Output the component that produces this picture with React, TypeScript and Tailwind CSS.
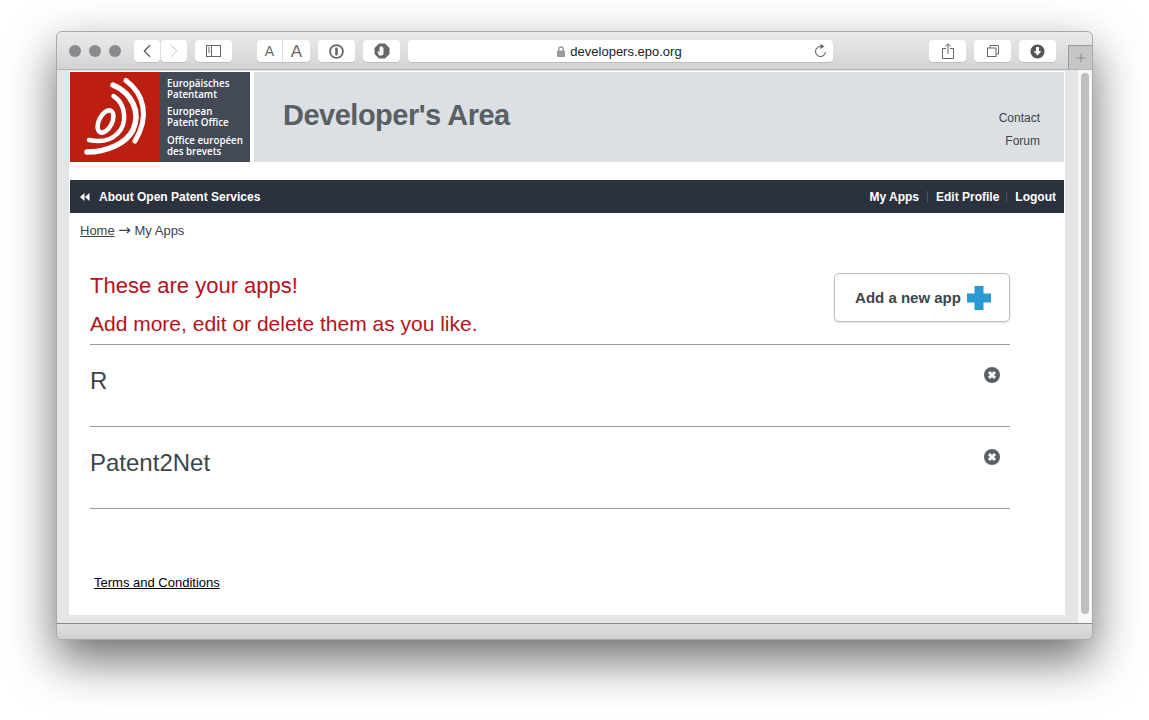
import { ChevronLeft, ChevronRight, Plus } from "lucide-react";

const sans = "font-['Liberation_Sans',Arial,sans-serif]";

function ToolButton({ className, children }: { className: string; children?: React.ReactNode }) {
  return (
    <div className={`flex h-[22px] items-center justify-center rounded-[4px] bg-white shadow-[0_1px_0_rgba(0,0,0,0.12)] ${className}`}>
      {children}
    </div>
  );
}

function Toolbar() {
  return (
    <div className="relative flex h-[38px] items-center rounded-t-[6px] border-b border-[#b4b4b4] bg-gradient-to-b from-[#ebebeb] to-[#d3d3d3] pl-3 pr-[36px] pt-px">
      <div className="flex gap-2">
        <span className="h-3 w-3 rounded-full bg-[#888a8e]" />
        <span className="h-3 w-3 rounded-full bg-[#888a8e]" />
        <span className="h-3 w-3 rounded-full bg-[#888a8e]" />
      </div>
      <div className="ml-[13px] flex gap-px">
        <ToolButton className="w-[26px]"><ChevronLeft size={22} strokeWidth={1.3} className="text-[#555]" /></ToolButton>
        <ToolButton className="w-[26px]"><ChevronRight size={22} strokeWidth={1.1} className="text-[#ccc]" /></ToolButton>
      </div>
      <ToolButton className="ml-2 w-[37px]">
        <svg width="15" height="12" viewBox="0 0 15 12" fill="none" stroke="#666">
          <rect x="0.5" y="0.5" width="14" height="11" />
          <path d="M5.5 0.5v11M2 3h2M2 5h2M2 7h2" />
        </svg>
      </ToolButton>
      <ToolButton className="ml-[25px] w-[53px]">
        <span className={`flex h-full w-[26px] items-center justify-center border-r border-[#ddd] pt-px text-[14px] text-[#666] ${sans}`}>A</span>
        <span className={`flex h-full w-[27px] items-center justify-center pt-px text-[17px] text-[#666] ${sans}`}>A</span>
      </ToolButton>
      <ToolButton className="ml-2 w-[37px]">
        <svg width="15" height="15" viewBox="0 0 15 15">
          <circle cx="7.5" cy="7.5" r="6.4" fill="none" stroke="#666" strokeWidth="1.8" />
          <rect x="6.2" y="3.5" width="2.6" height="8" rx="0.8" fill="#666" />
        </svg>
      </ToolButton>
      <ToolButton className="ml-2 w-[37px]">
        <svg width="16" height="16" viewBox="0 0 16 16">
          <path d="M5 0.5h6L15.5 5v6L11 15.5H5L0.5 11V5z" fill="#666" />
          <path d="M5 12.5 3.5 8.5l1 -.3 1 1.4V4.2h1v3.3V3h1v4.5V3.4h1V8V4.4h1V10c0 1.5-.8 2.5-2 2.5z" fill="#fff" />
        </svg>
      </ToolButton>
      <ToolButton className="relative ml-2 w-[425px]">
        <div className="flex items-center gap-[5px] pr-[2px] pt-px">
          <svg width="8" height="11" viewBox="0 0 8 11">
            <path d="M1.8 5V3.2a2.2 2.2 0 0 1 4.4 0V5" fill="none" stroke="#9a9a9a" strokeWidth="1.3" />
            <rect x="0" y="4.6" width="8" height="6.4" rx="0.8" fill="#9a9a9a" />
          </svg>
          <span className={`text-[13px] text-[#222] ${sans}`}>developers.epo.org</span>
        </div>
        <svg width="13" height="14" viewBox="0 0 13 14" fill="none" className="absolute right-[6px] top-[4px]">
          <path d="M7.5 2.6A5 5 0 1 0 11.5 8" stroke="#666" strokeWidth="1.1" />
          <path d="M6.5 0v5l4-2.5z" fill="#666" />
        </svg>
      </ToolButton>
      <ToolButton className="ml-auto w-[37px]">
        <svg width="12" height="16" viewBox="0 0 12 16" fill="none" stroke="#666">
          <path d="M4 5.5H.5v10h11v-10H8M6 11V1M3.3 3.5 6 .8l2.7 2.7" />
        </svg>
      </ToolButton>
      <ToolButton className="ml-2 w-[37px]">
        <svg width="12" height="12" viewBox="0 0 12 12" fill="none" stroke="#666">
          <rect x="0.5" y="3" width="8.5" height="8.5" />
          <path d="M3 3V.5h8.5V9H9" />
        </svg>
      </ToolButton>
      <ToolButton className="ml-2 w-[37px]">
        <svg width="15" height="15" viewBox="0 0 15 15">
          <circle cx="7.5" cy="7.5" r="7" fill="#555" />
          <path d="M6 3h3v4.2h2.4L7.5 11.4 3.6 7.2H6z" fill="#fff" />
        </svg>
      </ToolButton>
      <div className="absolute bottom-0 right-0 flex h-[24px] w-[24px] items-center justify-center border-l border-t border-[#9a9a9a] bg-[#c6c6c6]">
        <Plus size={14} strokeWidth={1} className="text-[#666]" />
      </div>
    </div>
  );
}

function EpoLogo() {
  return (
    <svg width="90" height="90" viewBox="0 0 90 90" className="shrink-0 bg-[#bc1e0f]" fill="none" stroke="#fff" strokeLinecap="round">
      <ellipse cx="35.5" cy="49.5" rx="6.5" ry="12" transform="rotate(27 35.5 49.5)" strokeWidth="4.5" />
      <path d="M43.5 24C56 32 58 52 47 62C40 69 29 70 19 68" strokeWidth="4.5" />
      <path d="M43 13C62 21 71 40 63 58C56 72 36 80 17 80" strokeWidth="5.5" />
      <path d="M56 8.5C74 22 80 44 65 69" strokeWidth="5" />
    </svg>
  );
}

function Header() {
  return (
    <div className="flex h-[90px] items-stretch">
      <EpoLogo />
      <div className="w-[90px] bg-[#434a56] pl-[7px] pt-[6px] font-['Open_Sans',sans-serif] text-[9.75px] font-semibold leading-[11px] text-white">
        <p>Europäisches<br />Patentamt</p>
        <p className="mt-[6px]">European<br />Patent Office</p>
        <p className="mt-[7px]">Office européen<br />des brevets</p>
      </div>
      <div className="ml-1 flex flex-1 justify-between bg-[#dcdfe4] pl-[29px] pr-[24px]">
        <h1 className={`pt-[26px] text-[29px] font-bold leading-[34px] tracking-[-0.5px] text-[#596063] ${sans}`}>Developer's Area</h1>
        <div className={`flex flex-col items-end gap-[7px] pt-[38px] text-[12px] leading-4 text-[#3d4548] ${sans}`}>
          <span>Contact</span>
          <span>Forum</span>
        </div>
      </div>
    </div>
  );
}

function AppRow({ name }: { name: string }) {
  return (
    <div className="flex h-[82px] justify-between border-b border-[#9a9a9a] pr-[10px]">
      <span className="pt-[22px] text-[24px] leading-7 text-[#3d4548]">{name}</span>
      <svg width="16" height="16" viewBox="0 0 16 16" className="mt-[22px]">
        <circle cx="8" cy="8" r="8" fill="#596063" />
        <path d="M5 5l6 6M11 5l-6 6" stroke="#fff" strokeWidth="3" />
      </svg>
    </div>
  );
}

function Page() {
  return (
    <div className={`h-[544px] w-[996px] bg-white px-px pt-px ${sans}`}>
      <Header />
      <nav className="mt-[18px] flex h-[33px] items-center justify-between bg-[#2b323e] pl-[10px] pr-2 text-[12px] font-bold text-white">
        <div className="flex items-center gap-[9px]">
          <svg width="10" height="8" viewBox="0 0 10 8" fill="#fff">
            <path d="M4.5 0v8L0 4zM9.5 0v8L5 4z" />
          </svg>
          <span>About Open Patent Services</span>
        </div>
        <div className="flex items-center">
          <span>My Apps</span>
          <span className="mx-2 h-[11px] w-px bg-[#4a515c]" />
          <span>Edit Profile</span>
          <span className="ml-[7px] mr-2 h-[11px] w-px bg-[#4a515c]" />
          <span>Logout</span>
        </div>
      </nav>
      <div className="pl-[10px] pt-[9px] text-[13px] leading-4 text-[#3d4548]">
        <span className="underline">Home</span> <span className="font-['DejaVu_Sans',sans-serif] text-[15px] leading-4">→</span> My Apps
      </div>
      <div className="w-[940px] pl-5 pt-[24px]">
        <div className="relative h-[82px] border-b border-[#9a9a9a] leading-[26px] text-[#b5121b]">
          <p className="pt-[10px] text-[22px]">These are your apps!</p>
          <p className="pt-[12px] text-[21px]">Add more, edit or delete them as you like.</p>
          <div className="absolute right-0 top-[10px] flex h-[49px] w-[176px] items-center justify-center gap-[6px] rounded-[5px] border border-[#b9c1c4] bg-white pl-[2px] shadow-[0_1px_2px_rgba(0,0,0,0.12)]">
            <span className="text-[15px] font-bold text-[#3d4548]">Add a new app</span>
            <svg width="24" height="24" viewBox="0 0 24 24" fill="#2a9ad4">
              <path d="M7.5 0h9v7.5H24v9h-7.5V24h-9v-7.5H0v-9h7.5z" />
            </svg>
          </div>
        </div>
        <AppRow name="R" />
        <AppRow name="Patent2Net" />
        <div className="pl-1 pt-[66px] text-[13px] leading-4 text-black underline">Terms and Conditions</div>
      </div>
    </div>
  );
}

export default function App() {
  return (
    <div className="h-[720px] w-[1149px] overflow-hidden bg-white pl-[56px] pt-[31px]">
      <div className="flex h-[609px] w-[1037px] flex-col rounded-[6px] border border-[#a8a8a8] bg-[#e4e5e7] shadow-[0_20px_48px_rgba(0,0,0,0.58)]">
        <Toolbar />
        <div className="flex flex-1">
          <div className="flex-1 pl-3 pt-px">
            <Page />
          </div>
          <div className="flex w-[14px] justify-center bg-[#f7f7f7] pt-[3px]">
            <div className="h-[541px] w-2 rounded-full bg-[#bfbfbf]" />
          </div>
        </div>
        <div className="h-[16px] rounded-b-[6px] border-t border-[#8a8a8a] bg-gradient-to-b from-[#dedede] to-[#d2d2d2]" />
      </div>
    </div>
  );
}
